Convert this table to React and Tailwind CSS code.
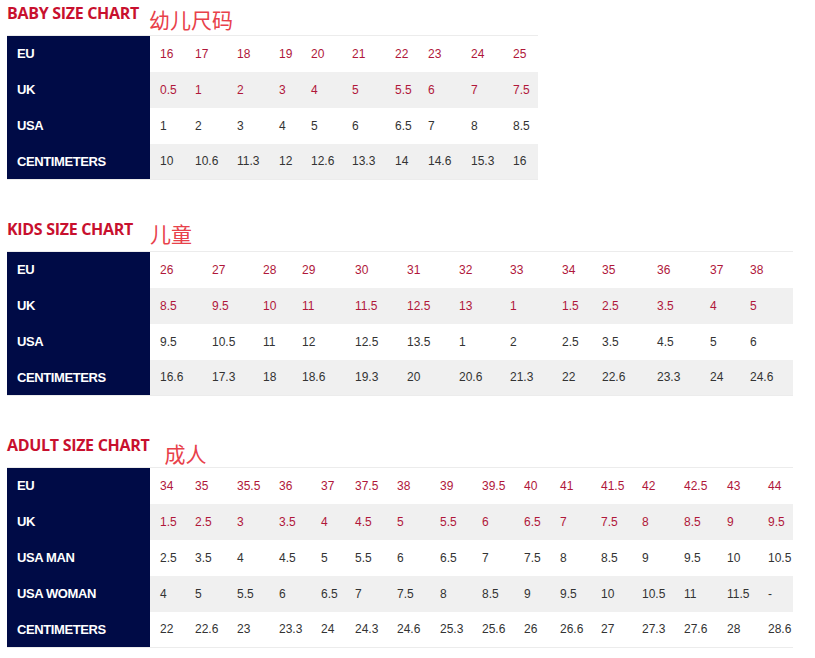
const sections = [
  {
    title: "BABY SIZE CHART",
    cn: "幼儿尺码",
    cnClass: "ml-[10px] mt-[5px]",
    gap: "mt-0",
    widths: [35, 42, 42, 32, 41, 43, 33, 43, 42, 35],
    rows: [
      { label: "EU", red: true, values: ["16", "17", "18", "19", "20", "21", "22", "23", "24", "25"] },
      { label: "UK", red: true, values: ["0.5", "1", "2", "3", "4", "5", "5.5", "6", "7", "7.5"] },
      { label: "USA", values: ["1", "2", "3", "4", "5", "6", "6.5", "7", "8", "8.5"] },
      { label: "CENTIMETERS", values: ["10", "10.6", "11.3", "12", "12.6", "13.3", "14", "14.6", "15.3", "16"] },
    ],
  },
  {
    title: "KIDS SIZE CHART",
    cn: "儿童",
    cnClass: "ml-[17px] mt-[3px]",
    gap: "mt-[38px]",
    widths: [52, 51, 39, 53, 52, 52, 51, 52, 40, 55, 53, 40, 53],
    rows: [
      { label: "EU", red: true, values: ["26", "27", "28", "29", "30", "31", "32", "33", "34", "35", "36", "37", "38"] },
      { label: "UK", red: true, values: ["8.5", "9.5", "10", "11", "11.5", "12.5", "13", "1", "1.5", "2.5", "3.5", "4", "5"] },
      { label: "USA", values: ["9.5", "10.5", "11", "12", "12.5", "13.5", "1", "2", "2.5", "3.5", "4.5", "5", "6"] },
      { label: "CENTIMETERS", values: ["16.6", "17.3", "18", "18.6", "19.3", "20", "20.6", "21.3", "22", "22.6", "23.3", "24", "24.6"] },
    ],
  },
  {
    title: "ADULT SIZE CHART",
    cn: "成人",
    cnClass: "ml-[15px] mt-[7px]",
    gap: "mt-[38px]",
    widths: [35, 42, 42, 42, 34, 42, 43, 42, 42, 36, 41, 41, 42, 43, 41, 35],
    rows: [
      { label: "EU", red: true, values: ["34", "35", "35.5", "36", "37", "37.5", "38", "39", "39.5", "40", "41", "41.5", "42", "42.5", "43", "44"] },
      { label: "UK", red: true, values: ["1.5", "2.5", "3", "3.5", "4", "4.5", "5", "5.5", "6", "6.5", "7", "7.5", "8", "8.5", "9", "9.5"] },
      { label: "USA MAN", values: ["2.5", "3.5", "4", "4.5", "5", "5.5", "6", "6.5", "7", "7.5", "8", "8.5", "9", "9.5", "10", "10.5"] },
      { label: "USA WOMAN", values: ["4", "5", "5.5", "6", "6.5", "7", "7.5", "8", "8.5", "9", "9.5", "10", "10.5", "11", "11.5", "-"] },
      { label: "CENTIMETERS", values: ["22", "22.6", "23", "23.3", "24", "24.3", "24.6", "25.3", "25.6", "26", "26.6", "27", "27.3", "27.6", "28", "28.6"] },
    ],
  },
];

function SizeTable({ section }) {
  return (
    <div className={section.gap}>
      {/* heading + chinese label */}
      <div className="flex items-start h-[33px]">
        <h2 className="font-['Open_Sans',sans-serif] font-bold text-[16px] leading-[20px] text-[#c8102e] mt-[1px] tracking-[-0.3px]">
          {section.title}
        </h2>
        <span className={`font-['Noto_Sans_CJK_SC',sans-serif] text-[21px] leading-[24px] text-[#e8414a] ${section.cnClass}`}>
          {section.cn}
        </span>
      </div>
      <table className="border-collapse table-fixed font-['Liberation_Sans',Arial,sans-serif]">
        <colgroup>
          <col style={{ width: 143 }} />
          {section.widths.map((w, i) => (
            <col key={i} style={{ width: w }} />
          ))}
        </colgroup>
        <tbody>
          {section.rows.map((row, ri) => (
            <tr
              key={row.label}
              className={`h-[36px] ${ri % 2 === 1 ? "bg-[#f0f0f0]" : "bg-white"} ${ri === 0 ? "border-t border-[#ececec]" : ""} ${ri === section.rows.length - 1 ? "border-b border-[#ececec]" : ""}`}
            >
              <th className="bg-[#000b46] text-white text-left font-bold text-[13px] tracking-[-0.4px] pl-[10px] p-0 align-middle">
                {row.label}
              </th>
              {row.values.map((v, i) => (
                <td
                  key={i}
                  className={`pl-[10px] p-0 text-[12px] align-middle whitespace-nowrap ${row.red ? "text-[#b0173a]" : "text-[#333333]"}`}
                >
                  {v}
                </td>
              ))}
            </tr>
          ))}
        </tbody>
      </table>
    </div>
  );
}

export default function App() {
  return (
    <div className="w-[815px] h-[658px] bg-white pl-[7px] pt-[2px] overflow-hidden">
      {sections.map((s) => (
        <SizeTable key={s.title} section={s} />
      ))}
    </div>
  );
}
